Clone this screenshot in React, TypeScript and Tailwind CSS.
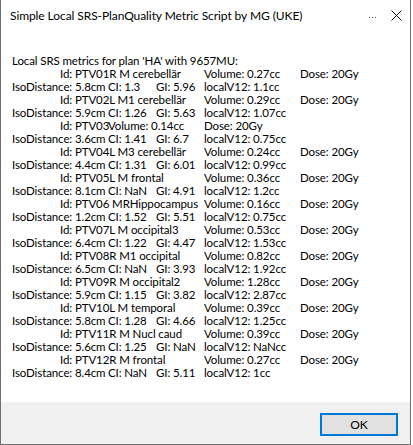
import React from 'react';

type Seg = { col: number; text: string };

const TAB = 48;

const ptvs = [
  { id: 'PTV01R M cerebellär', vol: '0.27cc', iso: '5.8cm', ci: '1.3', gi: '5.96', v12: '1.1cc' },
  { id: 'PTV02L M1 cerebellär', vol: '0.29cc', iso: '5.9cm', ci: '1.26', gi: '5.63', v12: '1.07cc' },
  { id: 'PTV03', vol: '0.14cc', iso: '3.6cm', ci: '1.41', gi: '6.7', v12: '0.75cc', short: true },
  { id: 'PTV04L M3 cerebellär', vol: '0.24cc', iso: '4.4cm', ci: '1.31', gi: '6.01', v12: '0.99cc' },
  { id: 'PTV05L M frontal', vol: '0.36cc', iso: '8.1cm', ci: 'NaN', gi: '4.91', v12: '1.2cc' },
  { id: 'PTV06 MRHippocampus', vol: '0.16cc', iso: '1.2cm', ci: '1.52', gi: '5.51', v12: '0.75cc' },
  { id: 'PTV07L M occipital3', vol: '0.53cc', iso: '6.4cm', ci: '1.22', gi: '4.47', v12: '1.53cc' },
  { id: 'PTV08R M1 occipital', vol: '0.82cc', iso: '6.5cm', ci: 'NaN', gi: '3.93', v12: '1.92cc' },
  { id: 'PTV09R M occipital2', vol: '1.28cc', iso: '5.9cm', ci: '1.15', gi: '3.82', v12: '2.87cc' },
  { id: 'PTV10L M temporal', vol: '0.39cc', iso: '5.8cm', ci: '1.28', gi: '4.66', v12: '1.25cc' },
  { id: 'PTV11R M Nucl caud', vol: '0.39cc', iso: '5.6cm', ci: '1.25', gi: 'NaN', v12: 'NaNcc' },
  { id: 'PTV12R M frontal', vol: '0.27cc', iso: '8.4cm', ci: 'NaN', gi: '5.11', v12: '1cc' },
];

// one text line, each segment starts at a 48px tab stop
function Line({ segs }: { segs: Seg[] }) {
  return (
    <div className="flex h-[13px] leading-[13px] whitespace-nowrap">
      {segs[0].col > 0 && <span className="shrink-0" style={{ width: segs[0].col * TAB }} />}
      {segs.map((s, i) => {
        const next = segs[i + 1]?.col;
        return (
          <span
            key={i}
            className="shrink-0"
            style={next !== undefined ? { width: (next - s.col) * TAB } : undefined}
          >
            {s.text}
          </span>
        );
      })}
    </div>
  );
}

export default function App() {
  return (
    <div
      className="w-[411px] h-[445px] flex flex-col bg-white border-x border-b border-[#707070] text-black text-[12px]"
      style={{ fontFamily: 'Lato, "Noto Sans", sans-serif' }}
    >
      {/* Title bar */}
      <div className="h-[31px] flex items-center pl-[9px] shrink-0">
        <span className="flex-1 leading-none tracking-[-0.08px]">
          Simple Local SRS-PlanQuality Metric Script by MG (UKE)
        </span>
        <svg width="8" height="2" viewBox="0 0 8 2" className="mt-[5px] mr-[14px]">
          <rect x="0" y="0" width="1" height="1" fill="#404040" />
          <rect x="3" y="0" width="1" height="1" fill="#404040" />
          <rect x="6" y="0" width="1" height="1" fill="#404040" />
        </svg>
        <svg width="11" height="11" viewBox="0 0 11 11" className="mr-[8px]">
          <path d="M0.5 0.5L10.5 10.5M10.5 0.5L0.5 10.5" stroke="#111" strokeWidth="1" />
        </svg>
      </div>

      {/* Message */}
      <div className="flex-1 pt-[23px] pl-[11px] text-[11.5px] tracking-[-0.1px]">
        <Line segs={[{ col: 0, text: "Local SRS metrics for plan 'HA' with 9657MU:" }]} />
        {ptvs.map((p) => (
          <React.Fragment key={p.id}>
            {p.short ? (
              <Line
                segs={[
                  { col: 1, text: `Id: ${p.id}` },
                  { col: 2, text: `Volume: ${p.vol}` },
                  { col: 4, text: 'Dose: 20Gy' },
                ]}
              />
            ) : (
              <Line
                segs={[
                  { col: 1, text: `Id: ${p.id}` },
                  { col: 4, text: `Volume: ${p.vol}` },
                  { col: 6, text: 'Dose: 20Gy' },
                ]}
              />
            )}
            <Line
              segs={[
                { col: 0, text: `IsoDistance: ${p.iso}` },
                { col: 2, text: `CI: ${p.ci}` },
                { col: 3, text: `GI: ${p.gi}` },
                { col: 4, text: `localV12: ${p.v12}` },
              ]}
            />
          </React.Fragment>
        ))}
      </div>

      {/* Footer */}
      <div className="h-[42px] shrink-0 bg-[#f0f0f0] flex items-start justify-end pt-[11px] pr-[12px]">
        <button className="w-[78px] h-[23px] border-2 border-[#0078d7] bg-[#e1e1e1] text-[12px] leading-none flex items-center justify-center">
          OK
        </button>
      </div>
    </div>
  );
}
